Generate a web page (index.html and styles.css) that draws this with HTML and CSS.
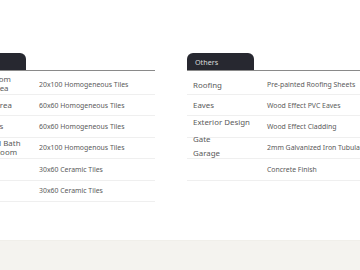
FILE: index.html
```html
<!DOCTYPE html>
<html lang="en">
<head>
    <meta charset="UTF-8">
    <meta name="viewport" content="width=device-width, initial-scale=1.0">
    <title>Specifications</title>
    <link rel="stylesheet" href="styles.css">
</head>
<body>
    <div class="specs">
        <div class="panels">
            <div class="panel">
                <div class="tab">Interior</div>
                <div class="rows">
                    <div class="row first">
                        <div class="label">Living Room<br>Dining Area</div>
                        <div class="value">20x100 Homogeneous Tiles</div>
                    </div>
                    <div class="row">
                        <div class="label">Kitchen Area</div>
                        <div class="value">60x60 Homogeneous Tiles</div>
                    </div>
                    <div class="row">
                        <div class="label">Bedrooms</div>
                        <div class="value">60x60 Homogeneous Tiles</div>
                    </div>
                    <div class="row">
                        <div class="label">Toilet and Bath<br>Powder Room</div>
                        <div class="value">20x100 Homogenous Tiles</div>
                    </div>
                    <div class="row">
                        <div class="label">Porch</div>
                        <div class="value">30x60 Ceramic Tiles</div>
                    </div>
                    <div class="row">
                        <div class="label">Stairs</div>
                        <div class="value">30x60 Ceramic Tiles</div>
                    </div>
                </div>
            </div>
            <div class="panel">
                <div class="tab">Others</div>
                <div class="rows">
                    <div class="row first">
                        <div class="label lower">Roofing</div>
                        <div class="value">Pre-painted Roofing Sheets</div>
                    </div>
                    <div class="row">
                        <div class="label">Eaves</div>
                        <div class="value">Wood Effect PVC Eaves</div>
                    </div>
                    <div class="row">
                        <div class="label raised">Exterior Design</div>
                        <div class="value">Wood Effect Cladding</div>
                    </div>
                    <div class="row">
                        <div class="label spaced">Gate<br>Garage</div>
                        <div class="value">2mm Galvanized Iron Tubular</div>
                    </div>
                    <div class="row">
                        <div class="label"></div>
                        <div class="value">Concrete Finish</div>
                    </div>
                </div>
            </div>
        </div>
    </div>
    <footer class="footer"></footer>
</body>
</html>
```

FILE: styles.css
```css
body {
    margin: 0;
    background: #fff;
    font-family: "Noto Sans", "Open Sans", sans-serif;
    color: #5a5a5a;
    overflow: hidden;
}

.specs {
    height: 240px;
    padding-top: 53px;
    box-sizing: border-box;
    overflow: hidden;
}

.panels {
    display: flex;
    gap: 32px;
    margin-left: -41px;
}

.panel {
    flex: 0 0 196px;
}

.tab {
    width: 67px;
    height: 17px;
    box-sizing: border-box;
    padding: 4px 0 0 8px;
    background: #272830;
    color: #dcdcdc;
    font-size: 7.2px;
    border-radius: 6px 6px 0 0;
}

.rows {
    border-top: 1px solid #8a8a8a;
}

.row {
    display: flex;
    align-items: center;
    height: 21.4px;
    box-sizing: border-box;
    border-bottom: 1px solid #efefef;
}

.row.first {
    height: 24px;
    padding-top: 3px;
}

.label {
    flex: 0 0 74px;
    padding-left: 6px;
    font-size: 7.9px;
    line-height: 9px;
    white-space: nowrap;
}

.label.lower {
    margin-top: 3px;
}

.label.raised {
    margin-bottom: 8px;
}

/* two stacked labels share one row and spill past it */
.label.spaced {
    line-height: 14px;
    margin-bottom: 3px;
}

.value {
    font-size: 6.9px;
    white-space: nowrap;
}

.footer {
    height: 30px;
    background: #f4f3ef;
    border-top: 1px solid #f0efea;
}
```
